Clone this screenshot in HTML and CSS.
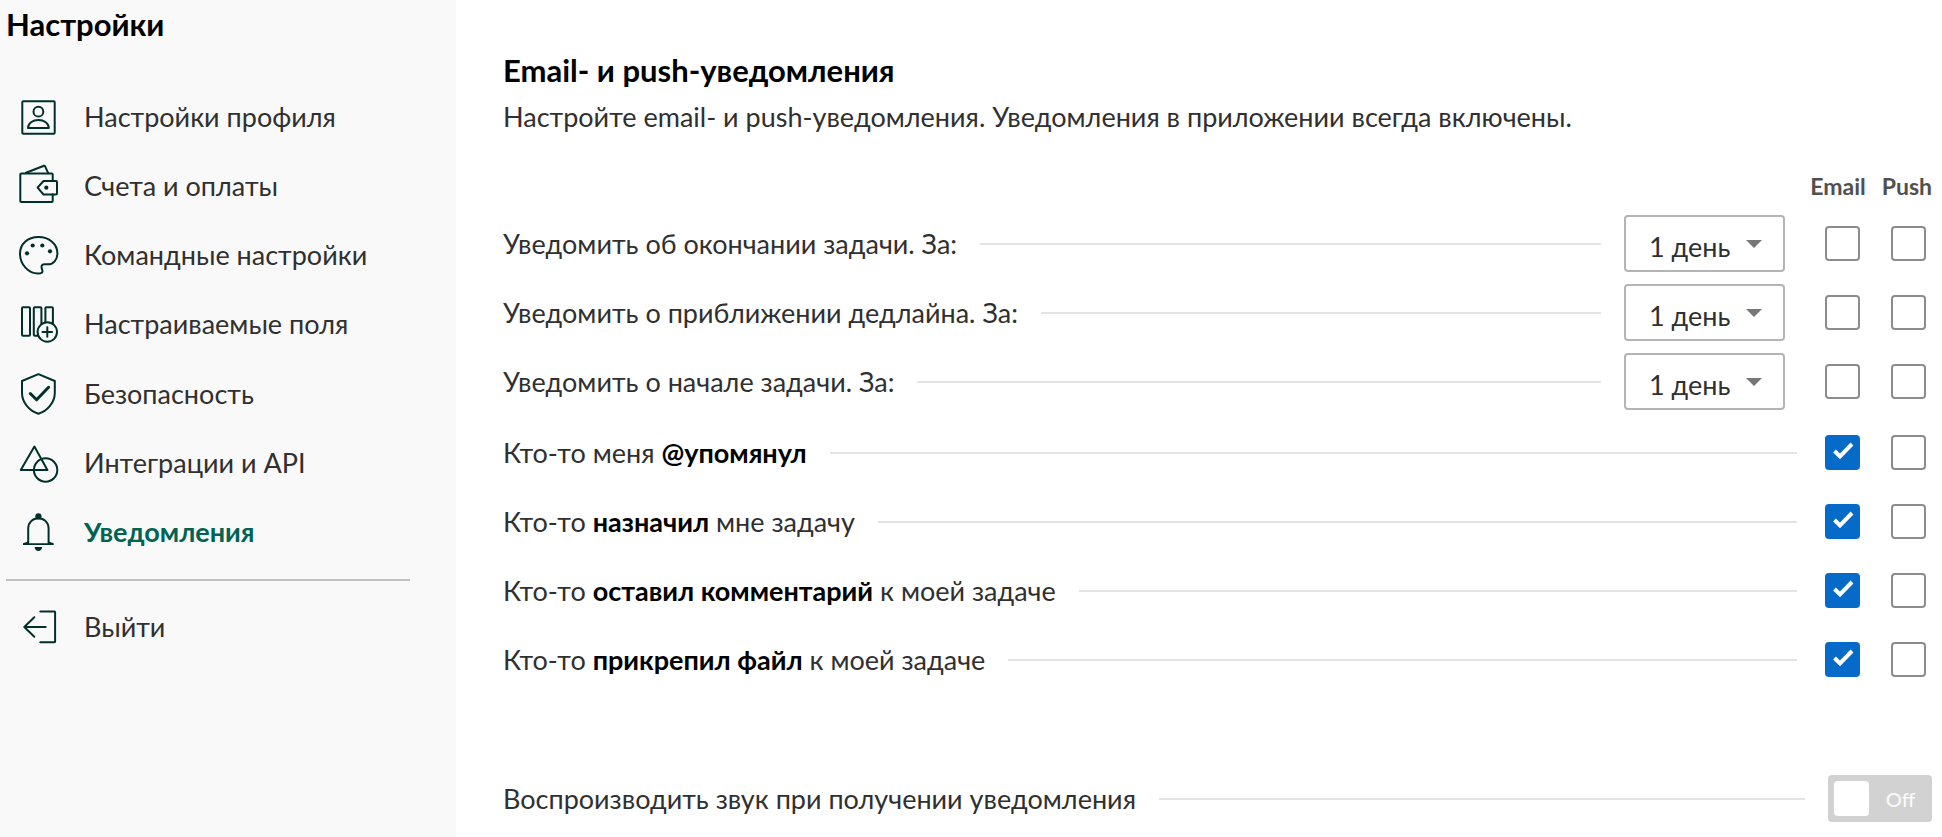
FILE: index.html
```html
<!DOCTYPE html>
<html lang="ru">
<head>
<meta charset="utf-8">
<meta name="viewport" content="width=device-width, initial-scale=1">
<title>Настройки</title>
<link rel="stylesheet" href="styles.css">
</head>
<body>
<div class="layout">
  <aside class="sidebar">
    <h1 class="sidebar-title">Настройки</h1>
    <nav class="menu">
      <a class="menu-item" href="#profile">
        <svg class="icon" viewBox="0 0 44 44" aria-hidden="true"><rect x="6.3" y="6.3" width="32.4" height="32.4" rx="1"/><circle cx="22.4" cy="16.7" r="4.9"/><path d="M12 33h20.8c0-4.800-4.700-8-10.400-8s-10.400 3.200-10.400 8z"/></svg>
        <span>Настройки профиля</span>
      </a>
      <a class="menu-item" href="#billing">
        <svg class="icon" viewBox="0 0 44 44" aria-hidden="true"><path d="M36.700 16.700V10.500a1 1 0 0 0-1-1H5.300a1 1 0 0 0-1 1v26.400a1 1 0 0 0 1 1h30.400a1 1 0 0 0 1-1v-6.600"/><path d="M27.500 17H40a1 1 0 0 1 1 1v11.500a1 1 0 0 1-1 1H27.500L21.600 23.700z"/><path d="M10 8.800 28 1.700l1 .4 3.200 7"/><circle class="dot" cx="30.300" cy="23.700" r="2.100"/></svg>
        <span>Счета и оплаты</span>
      </a>
      <a class="menu-item" href="#team">
        <svg class="icon" viewBox="0 0 44 44" aria-hidden="true"><path d="M22.400 4C11.500 4 4 11.200 4 20.600 4 31.500 12.500 40.600 22 40.600c3.500 0 5.200-1.200 4.200-3.800-1.200-3-.9-5.500 2.300-5.500h3.700c5.500 0 9.200-5 9.200-11C41.400 11 33.300 4 22.400 4z"/><circle class="dot" cx="11" cy="20.300" r="2.100"/><circle class="dot" cx="16.700" cy="12.500" r="2.100"/><circle class="dot" cx="26.300" cy="12.500" r="2.100"/><circle class="dot" cx="34" cy="18.300" r="2.100"/></svg>
        <span>Командные настройки</span>
      </a>
      <a class="menu-item" href="#fields">
        <svg class="icon" viewBox="0 0 44 44" aria-hidden="true"><rect x="6" y="5.200" width="8" height="28.600" rx="1"/><path d="M21.500 33.800H18.800a1 1 0 0 1-1-1V6.200a1 1 0 0 1 1-1h5.600a1 1 0 0 1 1 1V22"/><path d="M29.400 20.300V6.200a1 1 0 0 1 1-1h5.500a1 1 0 0 1 1 1V22"/><circle cx="31.300" cy="30" r="9.700"/><path d="M26.500 30h9.600M31.300 25.200v9.600"/></svg>
        <span>Настраиваемые поля</span>
      </a>
      <a class="menu-item" href="#security">
        <svg class="icon" viewBox="0 0 44 44" aria-hidden="true"><path d="M22.400 2.200 38.800 9V21c0 9.500-7.400 18-16.400 20.800C13.400 39 6 30.500 6 21V9z"/><path class="bold-line" d="m14.300 21.500 6.300 6.300L32.600 15.300"/></svg>
        <span>Безопасность</span>
      </a>
      <a class="menu-item" href="#api">
        <svg class="icon" viewBox="0 0 44 44" aria-hidden="true"><path d="M18.400 5.500 31.400 29H4.800z"/><circle cx="29.600" cy="29" r="11.700"/></svg>
        <span>Интеграции и API</span>
      </a>
      <a class="menu-item active" href="#notifications" aria-current="page">
        <svg class="icon" viewBox="0 0 44 44" aria-hidden="true"><circle class="dot" cx="22.400" cy="6.300" r="3.100"/><path d="M12.200 33.500V18.500c0-6 4.500-10.200 10.200-10.200s10.200 4.200 10.200 10.200v15"/><path class="dot" d="M7 35v-1.800l5-1.700v1.700h20.700v-1.700l5 1.700V35z"/><path class="dot" d="M18.600 36.900h7.600c-.3 2.500-1.800 4-3.800 4s-3.500-1.500-3.800-4z"/></svg>
        <span>Уведомления</span>
      </a>
    </nav>
    <hr class="divider">
    <a class="menu-item" href="#logout">
      <svg class="icon" viewBox="0 0 44 44" aria-hidden="true"><path d="M24.300 6.500h14a.8.800 0 0 1 .8.800v29.200a.8.800 0 0 1-.8.800h-14M29.700 22H8.500M18.300 12.200 8.300 22l10 9.800"/></svg>
      <span>Выйти</span>
    </a>
  </aside>

  <main class="content">
    <h2 class="title">Email- и push-уведомления</h2>
    <p class="description">Настройте email- и push-уведомления. Уведомления в приложении всегда включены.</p>

    <div class="columns"><span>Email</span><span>Push</span></div>

    <div class="group">
      <div class="row">
        <label class="row-label" for="end">Уведомить об окончании задачи. За:</label>
        <span class="leader"></span>
        <span class="select-box"><select class="select" id="end"><option>1 день</option></select></span>
        <span class="checks"><input class="check" type="checkbox" aria-label="Email"><input class="check" type="checkbox" aria-label="Push"></span>
      </div>
      <div class="row">
        <label class="row-label" for="deadline">Уведомить о приближении дедлайна. За:</label>
        <span class="leader"></span>
        <span class="select-box"><select class="select" id="deadline"><option>1 день</option></select></span>
        <span class="checks"><input class="check" type="checkbox" aria-label="Email"><input class="check" type="checkbox" aria-label="Push"></span>
      </div>
      <div class="row">
        <label class="row-label" for="start">Уведомить о начале задачи. За:</label>
        <span class="leader"></span>
        <span class="select-box"><select class="select" id="start"><option>1 день</option></select></span>
        <span class="checks"><input class="check" type="checkbox" aria-label="Email"><input class="check" type="checkbox" aria-label="Push"></span>
      </div>
    </div>

    <div class="group">
      <div class="row">
        <label class="row-label" for="mention">Кто-то меня <b>@упомянул</b></label>
        <span class="leader"></span>
        <span class="checks"><input class="check" type="checkbox" id="mention" checked><input class="check" type="checkbox" aria-label="Push"></span>
      </div>
      <div class="row">
        <label class="row-label" for="assign">Кто-то <b>назначил</b> мне задачу</label>
        <span class="leader"></span>
        <span class="checks"><input class="check" type="checkbox" id="assign" checked><input class="check" type="checkbox" aria-label="Push"></span>
      </div>
      <div class="row">
        <label class="row-label" for="comment">Кто-то <b>оставил комментарий</b> к моей задаче</label>
        <span class="leader"></span>
        <span class="checks"><input class="check" type="checkbox" id="comment" checked><input class="check" type="checkbox" aria-label="Push"></span>
      </div>
      <div class="row">
        <label class="row-label" for="attach">Кто-то <b>прикрепил файл</b> к моей задаче</label>
        <span class="leader"></span>
        <span class="checks"><input class="check" type="checkbox" id="attach" checked><input class="check" type="checkbox" aria-label="Push"></span>
      </div>
    </div>

    <div class="row sound-row">
      <label class="row-label" for="sound">Воспроизводить звук при получении уведомления</label>
      <span class="leader"></span>
      <button class="switch" id="sound" type="button" role="switch" aria-checked="false"><span class="knob"></span><span class="switch-text">Off</span></button>
    </div>
  </main>
</div>
</body>
</html>
```
FILE: styles.css
```css
* {
  box-sizing: border-box;
}

body {
  margin: 0;
  background: #fff;
  color: #303030;
  font-family: Lato, "Open Sans", sans-serif;
  font-size: 27px;
  line-height: 36px;
}

.layout {
  display: flex;
  min-height: 100vh;
}

.sidebar {
  flex: 0 0 456px;
  padding: 6px 46px 0 6px;
  background: #f9f9f9;
}

.sidebar-title,
.title {
  margin: 0;
  color: #000;
  font-size: 31px;
  font-weight: 700;
  line-height: 36px;
}

.menu {
  display: grid;
  grid-auto-rows: 1fr;
  min-height: 485px;
  margin-top: 40px;
}

.menu-item {
  display: flex;
  align-items: center;
  gap: 24px;
  min-height: 69px;
  padding-left: 10px;
  color: inherit;
  text-decoration: none;
}

.menu-item.active {
  color: #006353;
  font-weight: 700;
}

.icon {
  flex: none;
  width: 44px;
  height: 44px;
  fill: none;
  stroke: #00302a;
  stroke-width: 2;
  stroke-linecap: round;
  stroke-linejoin: round;
}

.icon .dot {
  fill: #00302a;
  stroke: none;
}

.icon .bold-line {
  stroke-width: 3;
}

.divider {
  height: 2px;
  margin: 12px 0 11px;
  border: 0;
  background: #c0c0c0;
}

.content {
  flex: 1;
  min-width: 0;
  padding: 52px 10px 0 47px;
}

.description {
  margin: 11px 0 0;
}

.columns {
  display: flex;
  justify-content: flex-end;
  gap: 16px;
  margin: 37px 0 9px;
  color: #505050;
  font-size: 23px;
  font-weight: 700;
  line-height: 28px;
}

.group {
  padding-right: 6px;
}

.group + .group {
  margin-top: 2px;
}

.row {
  display: flex;
  align-items: center;
  gap: 23px;
  height: 69px;
}

.row-label b {
  color: #000;
  font-weight: 700;
}

.leader {
  flex: 1;
  height: 2px;
  background: #e3e3e3;
}

.select-box {
  position: relative;
}

.select-box::after {
  content: "";
  position: absolute;
  top: 25px;
  right: 23px;
  border: 8px solid transparent;
  border-top-color: #777;
  border-bottom: 0;
  pointer-events: none;
}

.select {
  display: block;
  width: 161px;
  height: 57px;
  margin: 0;
  padding: 6px 44px 0 23px;
  border: 2px solid #b4b4b4;
  border-radius: 4px;
  appearance: none;
  background: #fff;
  color: #303030;
  font: inherit;
}

.checks {
  display: flex;
  gap: 31px;
  margin-left: 5px;
}

.select-box + .checks {
  margin-left: 17px;
}

.check {
  width: 35px;
  height: 35px;
  margin: 0;
  border: 2px solid #8c8c8c;
  border-radius: 4px;
  appearance: none;
  background: #fff;
}

.check:checked {
  border-color: #056ac8;
  background: #056ac8 url("data:image/svg+xml,%3Csvg xmlns='http://www.w3.org/2000/svg' viewBox='0 0 35 35'%3E%3Cpath d='M9.500 16l5.500 5.500 12-12.500' fill='none' stroke='%23fff' stroke-width='4'/%3E%3C/svg%3E") center / 35px 35px no-repeat border-box;
}

.sound-row {
  margin-top: 70px;
}

.switch {
  display: flex;
  align-items: center;
  width: 104px;
  height: 47px;
  padding: 0 6px;
  border: 0;
  border-radius: 4px;
  background: #d2d2d2;
  color: #fafafa;
  font: inherit;
  font-size: 20px;
  font-weight: 500;
  line-height: 24px;
}

.knob {
  flex: none;
  width: 35px;
  height: 35px;
  border-radius: 4px;
  background: #fff;
}

.switch-text {
  flex: 1;
  padding-left: 6px;
  text-align: center;
}
```
